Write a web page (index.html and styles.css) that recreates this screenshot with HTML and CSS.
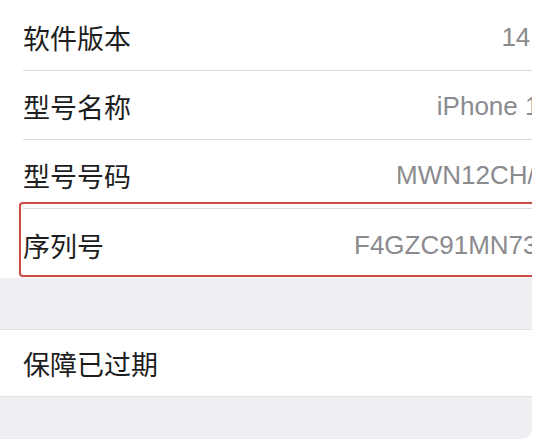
FILE: index.html
```html
<!DOCTYPE html>
<html lang="zh-CN">
<head>
  <meta charset="UTF-8" />
  <title>关于本机</title>
  <link rel="stylesheet" href="styles.css">
</head>
<body>
  <div class="screen">
    <div class="group first">
      <div class="row">
        <span class="label">软件版本</span>
        <span class="value">14.2</span>
      </div>
      <div class="row">
        <span class="label">型号名称</span>
        <span class="value">iPhone 11</span>
      </div>
      <div class="row">
        <span class="label">型号号码</span>
        <span class="value">MWN12CH/A</span>
      </div>
      <div class="row">
        <span class="label">序列号</span>
        <span class="value">F4GZC91MN73L</span>
      </div>
    </div>

    <div class="gap"></div>

    <div class="group boxed">
      <div class="row">
        <span class="label">保障已过期</span>
      </div>
    </div>

    <!-- annotation box over the serial row -->
    <div class="mark"></div>
  </div>
</body>
</html>
```

FILE: styles.css
```css
body {
  margin: 0;
  background: #fff;
  font-family: "Liberation Sans", "Noto Sans CJK SC", sans-serif;
}

.screen {
  position: relative;
  width: 532px;
  height: 439px;
  overflow: hidden;
  background: #efeff3;
  border-bottom-right-radius: 10px;
}

.group {
  background: #fff;
  width: 552px;
  padding-left: 23px;
  box-sizing: border-box;
}

.group.first {
  padding-top: 2px;
}

.group.boxed {
  border-top: 1px solid #e2e2e6;
  border-bottom: 1px solid #e2e2e6;
}

.row {
  display: flex;
  align-items: center;
  justify-content: space-between;
  height: 69px;
  box-sizing: border-box;
  padding-top: 3px;
  border-bottom: 1px solid #dadadd;
  white-space: nowrap;
}

.row:last-child {
  border-bottom: none;
}

.boxed .row {
  height: 66px;
  padding-top: 0;
}

.label {
  font-family: "Noto Sans CJK SC", sans-serif;
  font-size: 27px;
  color: #1e1e1e;
}

.value {
  font-size: 26px;
  color: #8b8b8f;
}

.gap {
  height: 51px;
}

.mark {
  position: absolute;
  left: 19px;
  top: 202px;
  width: 530px;
  height: 75px;
  box-sizing: border-box;
  border: 2px solid #cc4c45;
  border-radius: 4px;
  box-shadow: 0 0 1px rgba(204, 76, 69, 0.5);
}
```
